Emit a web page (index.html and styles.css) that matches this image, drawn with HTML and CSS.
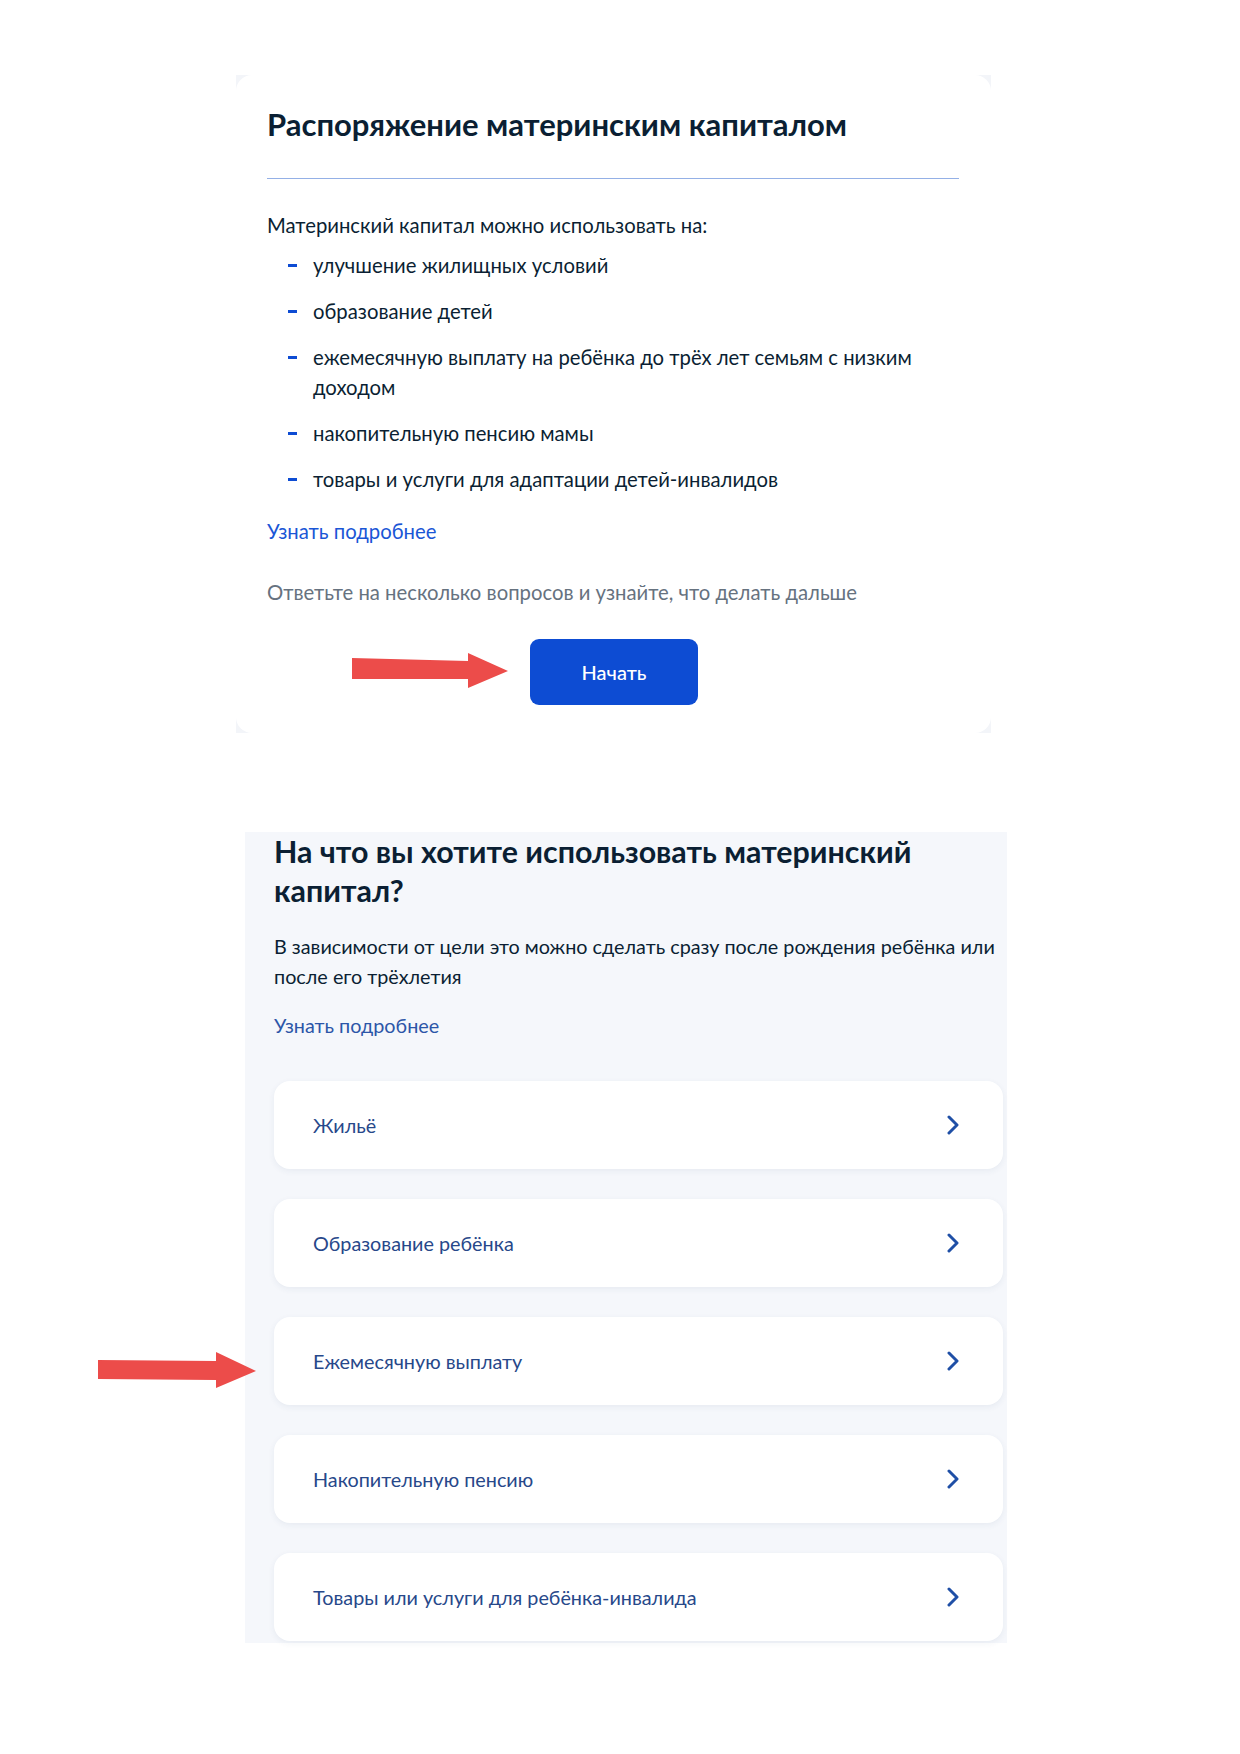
FILE: index.html
```html
<!DOCTYPE html>
<html lang="ru">
<head>
    <meta charset="UTF-8">
    <meta name="viewport" content="width=device-width, initial-scale=1.0">
    <title>Материнский капитал</title>
    <link rel="stylesheet" href="styles.css">
</head>
<body>
    <div class="intro-frame">
        <div class="intro-card">
            <h1>Распоряжение материнским капиталом</h1>
            <hr class="divider">
            <p class="lead">Материнский капитал можно использовать на:</p>
            <ul class="dash-list">
                <li>улучшение жилищных условий</li>
                <li>образование детей</li>
                <li>ежемесячную выплату на ребёнка до трёх лет семьям с низким доходом</li>
                <li>накопительную пенсию мамы</li>
                <li>товары и услуги для адаптации детей-инвалидов</li>
            </ul>
            <a class="more-link" href="#">Узнать подробнее</a>
            <p class="hint">Ответьте на несколько вопросов и узнайте, что делать дальше</p>
            <div class="start-row">
                <svg class="arrow arrow-start" width="158" height="38" viewBox="0 0 158 38">
                    <polygon points="0,5 116,8 116,0 156,18 116,35 116,26 0,26" fill="#ec4c4a"/>
                </svg>
                <button class="start-btn">Начать</button>
            </div>
        </div>
    </div>

    <div class="choice-panel">
        <svg class="arrow arrow-side" width="160" height="38" viewBox="0 0 160 38">
            <polygon points="0,8 118,9 118,0 158,19 118,36 118,28 0,27" fill="#ec4c4a"/>
        </svg>
        <h2>На что вы хотите использовать материнский капитал?</h2>
        <p class="panel-text">В зависимости от цели это можно сделать сразу после рождения ребёнка или после его трёхлетия</p>
        <a class="panel-link" href="#">Узнать подробнее</a>

        <div class="options">
            <a class="option" href="#">
                <span>Жильё</span>
                <svg class="chevron" width="12" height="20" viewBox="0 0 12 20"><path d="M2 2l8 8-8 8"/></svg>
            </a>
            <a class="option" href="#">
                <span>Образование ребёнка</span>
                <svg class="chevron" width="12" height="20" viewBox="0 0 12 20"><path d="M2 2l8 8-8 8"/></svg>
            </a>
            <a class="option" href="#">
                <span>Ежемесячную выплату</span>
                <svg class="chevron" width="12" height="20" viewBox="0 0 12 20"><path d="M2 2l8 8-8 8"/></svg>
            </a>
            <a class="option" href="#">
                <span>Накопительную пенсию</span>
                <svg class="chevron" width="12" height="20" viewBox="0 0 12 20"><path d="M2 2l8 8-8 8"/></svg>
            </a>
            <a class="option" href="#">
                <span>Товары или услуги для ребёнка-инвалида</span>
                <svg class="chevron" width="12" height="20" viewBox="0 0 12 20"><path d="M2 2l8 8-8 8"/></svg>
            </a>
        </div>
    </div>
</body>
</html>
```

FILE: styles.css
```css
* {
    margin: 0;
    padding: 0;
    box-sizing: border-box;
}

body {
    font-family: Lato, "Noto Sans", sans-serif;
    background: #ffffff;
    color: #0b1f33;
    padding-top: 75px;
    min-height: 1754px;
}

/* верхняя карточка */
.intro-frame {
    width: 755px;
    height: 658px;
    margin-left: 236px;
    background: #f3f5f9;
}

.intro-card {
    height: 100%;
    background: #ffffff;
    border-radius: 16px;
    padding: 31px 32px 30px 31px;
}

h1 {
    font-size: 31px;
    line-height: 36px;
    font-weight: 700;
    color: #0b1f33;
}

.divider {
    border: none;
    height: 1px;
    background: #94b0e6;
    margin-top: 36px;
}

.lead {
    font-size: 20.3px;
    line-height: 30px;
    margin-top: 31px;
}

.dash-list {
    list-style: none;
    margin-top: 10px;
}

.dash-list li {
    position: relative;
    font-size: 20.3px;
    line-height: 30px;
    padding-left: 46px;
    padding-right: 30px;
    margin-bottom: 16px;
}

.dash-list li::before {
    content: "";
    position: absolute;
    left: 21px;
    top: 14px;
    width: 9px;
    height: 3px;
    background: #0d4cd3;
}

.more-link {
    display: block;
    font-size: 20.3px;
    line-height: 30px;
    color: #1a56d6;
    text-decoration: none;
    margin-top: 22px;
}

.hint {
    font-size: 20.3px;
    line-height: 30px;
    color: #66727f;
    margin-top: 31px;
}

.start-row {
    display: flex;
    align-items: center;
    margin-top: 32px;
    padding-left: 85px;
    gap: 20px;
}

.start-btn {
    width: 168px;
    height: 66px;
    border: none;
    border-radius: 9px;
    background: #0d4cd3;
    color: #ffffff;
    font-family: Lato, "Noto Sans", sans-serif;
    font-size: 20px;
    font-weight: 500;
}

/* нижний блок с выбором */
.choice-panel {
    position: relative;
    width: 762px;
    height: 811px;
    margin-top: 99px;
    margin-left: 245px;
    padding-left: 29px;
    background: #f5f7fb;
}

.arrow-side {
    position: absolute;
    left: -147px;
    top: 520px;
}

h2 {
    font-size: 30.4px;
    line-height: 39px;
    font-weight: 700;
    color: #0b1f33;
    padding-right: 40px;
}

.panel-text {
    font-size: 19.8px;
    line-height: 30px;
    margin-top: 21px;
    padding-right: 4px;
}

.panel-link {
    display: block;
    font-size: 19.8px;
    line-height: 30px;
    color: #2c56a8;
    text-decoration: none;
    margin-top: 19px;
}

.options {
    display: flex;
    flex-direction: column;
    gap: 30px;
    margin-top: 41px;
    padding-right: 4px;
}

.option {
    display: flex;
    align-items: center;
    justify-content: space-between;
    height: 88px;
    padding: 0 44px 0 39px;
    background: #ffffff;
    border-radius: 16px;
    box-shadow: 0 2px 6px rgba(40, 70, 120, 0.07);
    font-size: 19.8px;
    color: #27488a;
    text-decoration: none;
}

.chevron path {
    fill: none;
    stroke: #1f4fa6;
    stroke-width: 3;
    stroke-linecap: round;
    stroke-linejoin: round;
}
```
